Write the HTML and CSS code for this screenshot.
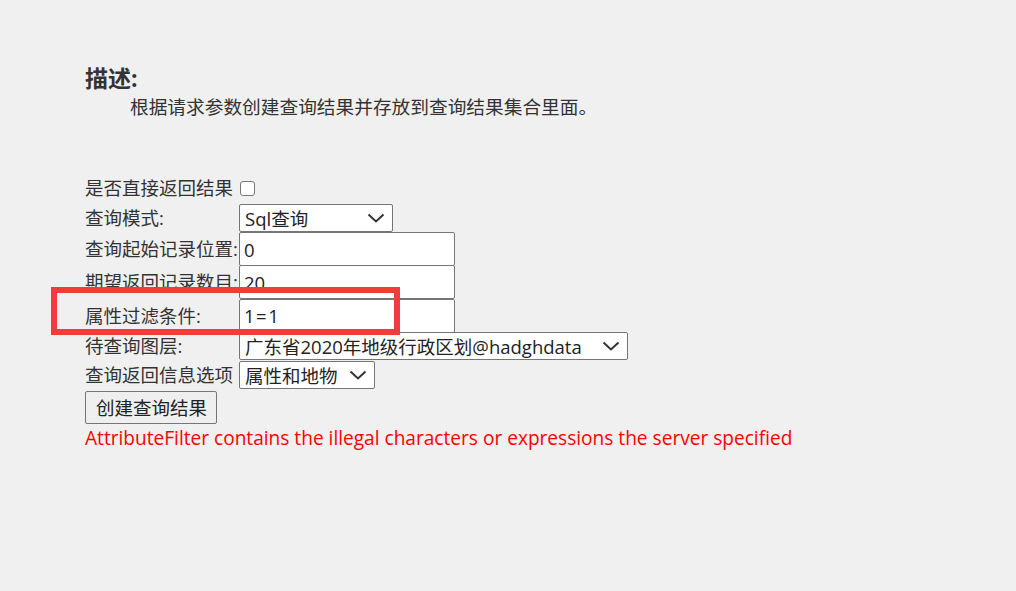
FILE: index.html
```html
<!DOCTYPE html>
<html lang="zh-CN">
<head>
<meta charset="utf-8">
<title>创建查询结果</title>
<link rel="stylesheet" href="styles.css">
</head>
<body>
<div class="page">
  <h3 class="title">描述:</h3>
  <p class="desc">根据请求参数创建查询结果并存放到查询结果集合里面。</p>
  <form class="form">
    <div class="row row-check">
      <span class="label">是否直接返回结果</span>
      <span class="check"></span>
    </div>
    <div class="row row-select">
      <span class="label">查询模式:</span>
      <span class="select sel-mode">Sql查询<svg class="chev" viewBox="0 0 18 10"><path d="M1.5 1.5 L9 8.5 L16.5 1.5" /></svg></span>
    </div>
    <div class="row row-input">
      <span class="label">查询起始记录位置:</span>
      <span class="input">0</span>
    </div>
    <div class="row row-input">
      <span class="label">期望返回记录数目:</span>
      <span class="input">20</span>
    </div>
    <div class="row row-input">
      <span class="label">属性过滤条件:</span>
      <span class="input eq">1=1</span>
    </div>
    <div class="row row-select">
      <span class="label">待查询图层:</span>
      <span class="select sel-layer">广东省2020年地级行政区划@hadghdata<svg class="chev" viewBox="0 0 18 10"><path d="M1.5 1.5 L9 8.5 L16.5 1.5" /></svg></span>
    </div>
    <div class="row row-select">
      <span class="label">查询返回信息选项</span>
      <span class="select sel-opt">属性和地物<svg class="chev" viewBox="0 0 18 10"><path d="M1.5 1.5 L9 8.5 L16.5 1.5" /></svg></span>
    </div>
    <div class="btn-row"><span class="button">创建查询结果</span></div>
    <div class="error">AttributeFilter contains the illegal characters or expressions the server specified</div>
  </form>
  <div class="highlight"></div>
</div>
</body>
</html>
```
FILE: styles.css
```css
html, body {
  margin: 0;
  padding: 0;
  background: #f0f0f0;
}
body {
  font-family: "Open Sans", "Noto Sans CJK SC", sans-serif;
  color: #333;
  font-size: 18.5px;
}
.page {
  position: relative;
  width: 1016px;
  height: 591px;
  padding: 63px 0 0 85px;
  box-sizing: border-box;
}
.title {
  margin: 0;
  font-size: 23px;
  font-weight: bold;
  line-height: 30px;
  color: #333;
}
.desc {
  margin: 0;
  padding-left: 45px;
  line-height: 28px;
  font-size: 18.7px;
}
.form {
  margin-top: 52px;
  display: flex;
  flex-direction: column;
}
.row {
  display: grid;
  grid-template-columns: 154px auto;
  align-items: center;
}
.label {
  white-space: nowrap;
  line-height: 24px;
}
.row-check { height: 30px; }
.row-select { height: 29px; }
.row-input { height: 33.3px; }
.check {
  width: 13px;
  height: 13px;
  border: 1px solid #767676;
  border-radius: 3px;
  background: #fff;
  margin-left: 1px;
  margin-top: 1px;
}
.select {
  box-sizing: border-box;
  height: 28px;
  display: flex;
  align-items: center;
  justify-content: space-between;
  background: #fff;
  border: 1px solid #767676;
  border-radius: 2px;
  padding: 0 7px 0 5px;
  white-space: nowrap;
  color: #222;
}
.sel-mode { width: 154px; }
.sel-layer { width: 389px; }
.sel-opt { width: 136px; }
.chev {
  width: 18px;
  height: 10px;
  flex: none;
  margin-left: 8px;
}
.chev path {
  fill: none;
  stroke: #333;
  stroke-width: 2;
}
.input {
  box-sizing: border-box;
  width: 216px;
  height: 34px;
  display: flex;
  align-items: center;
  background: #fff;
  border: 1px solid #767676;
  border-radius: 2px;
  padding: 0 4px 0;
  color: #222;
}
.eq {
  letter-spacing: 1.5px;
}
.btn-row {
  display: flex;
  height: 35px;
  align-items: center;
}
.button {
  box-sizing: border-box;
  height: 33px;
  display: flex;
  align-items: center;
  padding: 0 9px 0 10px;
  background: #efefef;
  border: 1px solid #767676;
  border-radius: 2px;
  color: #222;
}
.error {
  color: #ff0000;
  line-height: 26px;
  font-size: 19.1px;
}
.highlight {
  position: absolute;
  left: 51px;
  top: 287px;
  width: 349px;
  height: 48px;
  box-sizing: border-box;
  border: 6px solid #f53a3a;
}
```
